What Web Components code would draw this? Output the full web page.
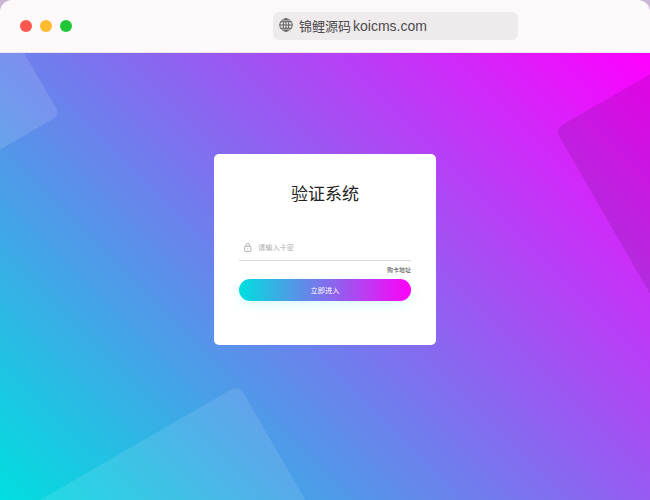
<!DOCTYPE html>
<html lang="zh">
<head>
<meta charset="utf-8">
<title>验证系统</title>
<style>
  html, body { margin: 0; height: 100%; }
  body {
    overflow: hidden;
    font-family: "Liberation Sans", "Noto Sans CJK SC", sans-serif;
    background: #c9b6d6;
  }
</style>
</head>
<body>
<browser-window>
  <span slot="address"><span style="font-size:13px;margin-right:2px">锦鲤源码</span>koicms.com</span>
  <login-card heading="验证系统" placeholder="请输入卡密" link="购卡地址" action="立即进入"></login-card>
</browser-window>

<script>
class TrafficLights extends HTMLElement {
  connectedCallback() {
    this.attachShadow({ mode: "open" });
    this.shadowRoot.innerHTML = `
      <style>
        :host { display: flex; gap: 8px; }
        i { display: block; width: 12px; height: 12px; border-radius: 50%; }
        i:nth-of-type(1) { background: #fd5750; }
        i:nth-of-type(2) { background: #febb2d; }
        i:nth-of-type(3) { background: #1fc637; }
      </style>
      <i></i><i></i><i></i>
    `;
  }
}

class AddressBar extends HTMLElement {
  connectedCallback() {
    this.attachShadow({ mode: "open" });
    this.shadowRoot.innerHTML = `
      <style>
        :host {
          display: flex;
          align-items: center;
          box-sizing: border-box;
          width: 245px;
          height: 28px;
          padding-left: 6px;
          gap: 6px;
          border-radius: 6px;
          background: #efebed;
          color: #4c4a4c;
          font-size: 14px;
        }
        svg { flex: none; width: 14px; height: 14px; margin-top: -2px; }
      </style>
      <svg viewBox="0 0 14 14" fill="none" stroke="#5a585a" stroke-width="1">
        <circle cx="7" cy="7" r="6.2"/>
        <ellipse cx="7" cy="7" rx="2.8" ry="6.2"/>
        <path d="M7 .8v12.4M.8 7h12.4M1.7 3.8h10.6M1.7 10.2h10.6"/>
      </svg>
      <slot></slot>
    `;
  }
}

class LoginCard extends HTMLElement {
  connectedCallback() {
    this.attachShadow({ mode: "open" });
    const attr = name => this.getAttribute(name) || "";
    this.shadowRoot.innerHTML = `
      <style>
        :host {
          display: flex;
          flex-direction: column;
          box-sizing: border-box;
          position: relative;
          width: 222px;
          height: 191px;
          padding: 26px 25px 0;
          border-radius: 5px;
          background: #fff;
          font-family: "Noto Sans CJK SC", sans-serif;
        }
        h1 {
          margin: 0;
          height: 25px;
          line-height: 25px;
          font-size: 17px;
          font-weight: 400;
          text-align: center;
          color: #222;
        }
        .field {
          display: flex;
          align-items: center;
          gap: 6.5px;
          box-sizing: border-box;
          height: 31px;
          margin-top: 25px;
          padding: 4px 0 0 5px;
          border-bottom: 1px solid #d9d9d9;
          font-size: 7.2px;
          color: #b0b0b0;
        }
        svg { flex: none; width: 7.5px; height: 9px; }
        .link {
          height: 18px;
          line-height: 18px;
          font-size: 6px;
          text-align: right;
          color: #444;
        }
        button {
          display: block;
          width: 100%;
          height: 22px;
          padding: 0;
          border: 0;
          border-radius: 11px;
          background: linear-gradient(to right, #00e0df, #ff00f8);
          box-shadow: 0 4px 12px rgba(0, 224, 240, .14);
          font: inherit;
          font-size: 7.2px;
          color: #fff;
        }
      </style>
      <h1>${attr("heading")}</h1>
      <div class="field">
        <svg viewBox="0 0 9 11" fill="none" stroke="#a9a9a9" stroke-width="1.1">
          <rect x=".7" y="4" width="7.6" height="6.3" rx="1"/>
          <path d="M2.3 4V2.8a2.2 2.2 0 0 1 4.4 0V4M4.5 6.4v1.6"/>
        </svg>
        <span>${attr("placeholder")}</span>
      </div>
      <div class="link">${attr("link")}</div>
      <button type="button">${attr("action")}</button>
    `;
  }
}

class BrowserWindow extends HTMLElement {
  connectedCallback() {
    this.attachShadow({ mode: "open" });
    this.shadowRoot.innerHTML = `
      <style>
        :host { display: block; width: 650px; height: 500px; overflow: hidden; }
        header {
          display: flex;
          align-items: center;
          box-sizing: border-box;
          height: 53px;
          padding: 0 20px 1px;
          border-radius: 12px 12px 0 0;
          border-bottom: 1px solid #ece6ea;
          background: #fdf9fa;
        }
        address-bar { margin-left: 201px; }
        main {
          position: relative;
          display: flex;
          justify-content: center;
          align-items: flex-start;
          height: 447px;
          padding-top: 101px;
          box-sizing: border-box;
          overflow: hidden;
          background: linear-gradient(45deg, #00dfdf, #ff00ff);
        }
        .shape {
          position: absolute;
          width: 260px;
          height: 260px;
          border-radius: 8px;
          transform: rotate(-30deg);
        }
        .a { left: -200px; top: -198px; transform-origin: 100% 100%; background: rgba(255, 255, 255, .12); }
        .b { left: -21px; top: 332px; transform-origin: 100% 0; background: rgba(255, 255, 255, .1); }
        .c { left: 555px; top: 76px; transform-origin: 0 0; background: rgba(0, 0, 0, .1); }
        ::slotted(login-card) { position: relative; }
      </style>
      <header>
        <traffic-lights></traffic-lights>
        <address-bar><slot name="address"></slot></address-bar>
      </header>
      <main>
        <div class="shape a"></div>
        <div class="shape b"></div>
        <div class="shape c"></div>
        <slot></slot>
      </main>
    `;
  }
}

customElements.define("traffic-lights", TrafficLights);
customElements.define("address-bar", AddressBar);
customElements.define("login-card", LoginCard);
customElements.define("browser-window", BrowserWindow);
</script>
</body>
</html>
